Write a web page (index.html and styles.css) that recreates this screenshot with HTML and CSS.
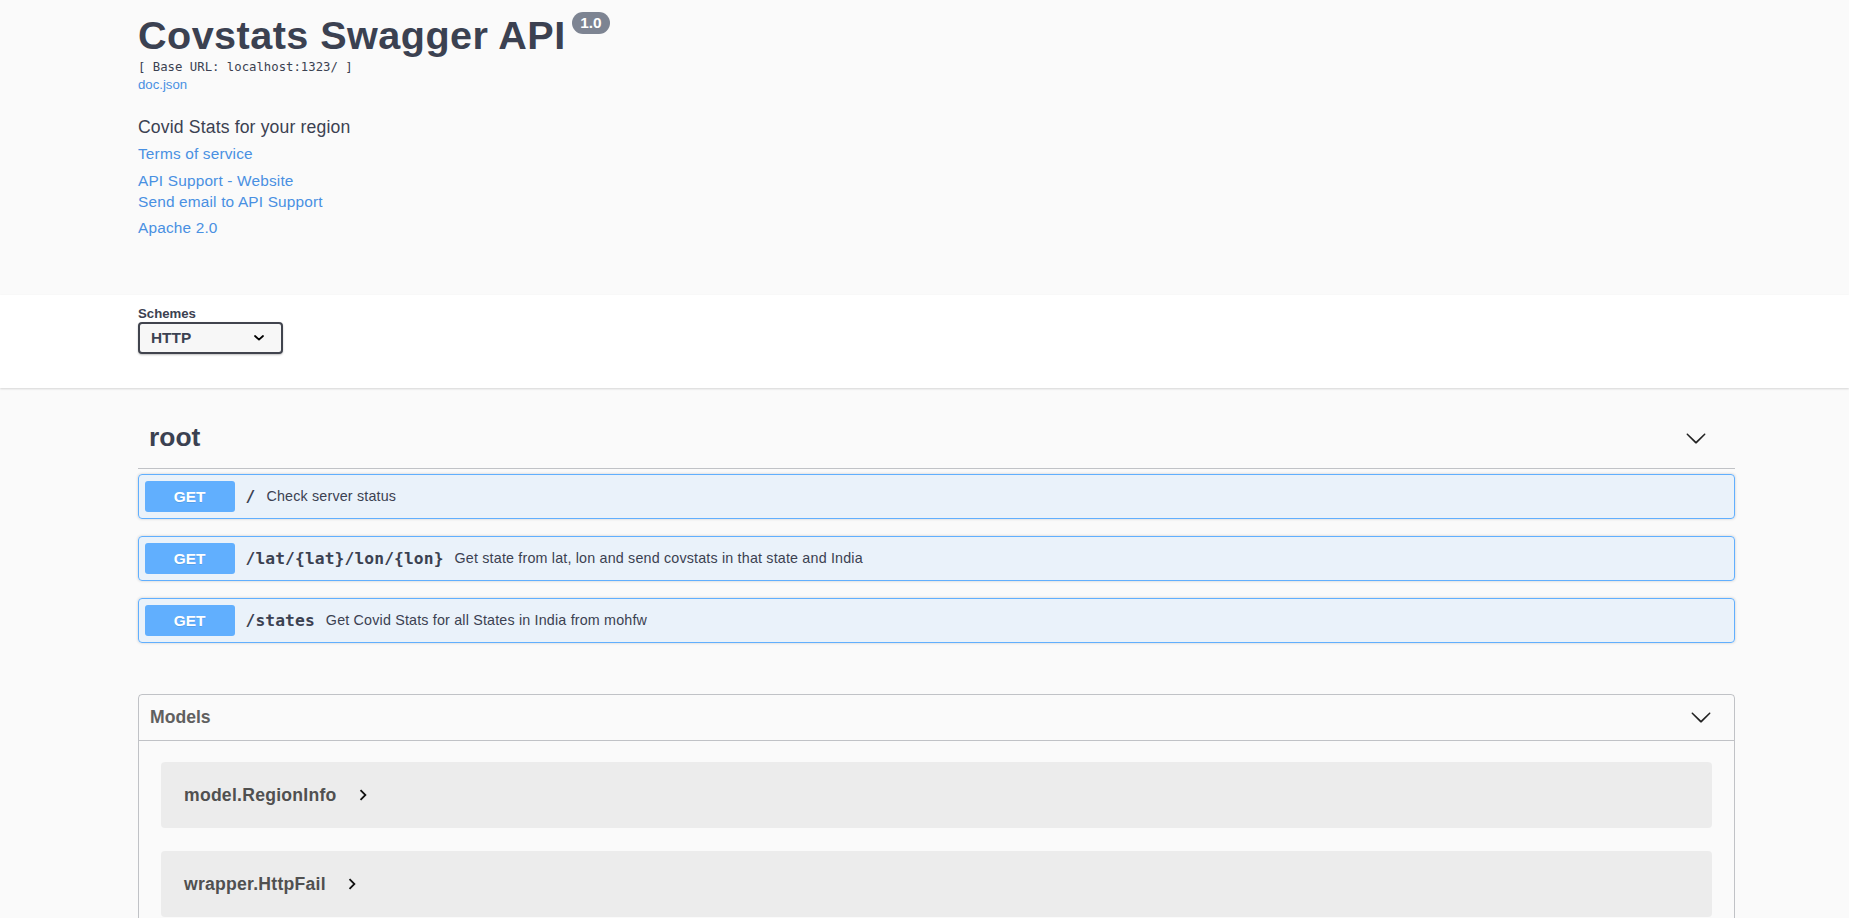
FILE: index.html
```html
<!DOCTYPE html>
<html lang="en">
<head>
<meta charset="utf-8">
<title>Covstats Swagger API</title>
<link rel="stylesheet" href="styles.css">
</head>
<body>
<div class="info">
  <div class="wrapper">
    <h2 class="title">Covstats Swagger API<span class="version">1.0</span></h2>
    <p class="base-url">[ Base URL: localhost:1323/ ]</p>
    <a class="link doc-link" href="#">doc.json</a>
    <p class="description">Covid Stats for your region</p>
    <div class="info-links">
      <a class="link row terms" href="#">Terms of service</a>
      <div class="contact">
        <a class="link row" href="#">API Support - Website</a>
        <a class="link row" href="#">Send email to API Support</a>
      </div>
      <a class="link row license" href="#">Apache 2.0</a>
    </div>
  </div>
</div>

<div class="schemes-bar">
  <div class="wrapper">
    <div class="schemes-label">Schemes</div>
    <div class="select">
      <span>HTTP</span>
      <svg class="select-arrow" width="10" height="6" viewBox="0 0 10 6"><polyline points="1,1 5,4.6 9,1" fill="none" stroke="#000" stroke-width="1.8" stroke-linecap="round" stroke-linejoin="round"/></svg>
    </div>
  </div>
</div>

<div class="wrapper ops">
  <div class="tag-section">
    <h3 class="tag">
      <span>root</span>
      <svg class="chev" width="22" height="22" viewBox="0 0 20 20"><path d="M17.418 6.109c.272-.268.709-.268.979 0s.271.701 0 .969l-7.908 7.83c-.27.268-.707.268-.979 0l-7.908-7.830c-.27-.268-.27-.701 0-.969.271-.268.709-.268.979 0L10 13.25l7.418-7.141z"/></svg>
    </h3>
    <div class="opblock">
      <div class="summary">
        <span class="method">GET</span>
        <span class="path">/</span>
        <span class="desc">Check server status</span>
      </div>
    </div>
    <div class="opblock">
      <div class="summary">
        <span class="method">GET</span>
        <span class="path">/lat/{lat}/lon/{lon}</span>
        <span class="desc">Get state from lat, lon and send covstats in that state and India</span>
      </div>
    </div>
    <div class="opblock">
      <div class="summary">
        <span class="method">GET</span>
        <span class="path">/states</span>
        <span class="desc">Get Covid Stats for all States in India from mohfw</span>
      </div>
    </div>
  </div>

  <section class="models">
    <h4 class="models-head">
      <span>Models</span>
      <svg class="chev" width="22" height="22" viewBox="0 0 20 20"><path d="M17.418 6.109c.272-.268.709-.268.979 0s.271.701 0 .969l-7.908 7.83c-.27.268-.707.268-.979 0l-7.908-7.83c-.27-.268-.27-.701 0-.969.271-.268.709-.268.979 0L10 13.25l7.418-7.141z"/></svg>
    </h4>
    <div class="models-body">
      <div class="model">
        <span class="model-title">model.RegionInfo</span>
        <svg class="model-arrow" width="22" height="22" viewBox="0 0 24 24"><path d="M10 6L8.59 7.41 13.17 12l-4.58 4.590L10 18l6-6z"/></svg>
      </div>
      <div class="model">
        <span class="model-title">wrapper.HttpFail</span>
        <svg class="model-arrow" width="22" height="22" viewBox="0 0 24 24"><path d="M10 6L8.59 7.41 13.17 12l-4.58 4.59L10 18l6-6z"/></svg>
      </div>
    </div>
  </section>
</div>
</body>
</html>
```

FILE: styles.css
```css
html, body {
  margin: 0;
  padding: 0;
  overflow: hidden;
}

body {
  background: #fafafa;
  font-family: "Liberation Sans", Arial, sans-serif;
  color: #3b4151;
}

.wrapper {
  width: 1597px;
  margin: 0 0 0 138px;
  box-sizing: border-box;
}

/* ---------- info ---------- */
.info {
  padding: 11px 0 56.7px;
}

.title {
  margin: 0;
  font-size: 39.6px;
  line-height: 48px;
  font-weight: 700;
  letter-spacing: 0.45px;
  color: #3b4151;
  white-space: nowrap;
}

.version {
  display: inline-block;
  vertical-align: top;
  margin: 1px 0 0 6px;
  height: 22px;
  line-height: 22px;
  padding: 0 8.6px;
  border-radius: 57px;
  background: #7d8492;
  color: #fff;
  font-size: 15.4px;
  letter-spacing: 0;
}

.base-url {
  margin: 0;
  font-family: "DejaVu Sans Mono", "Liberation Mono", monospace;
  font-size: 12.3px;
  line-height: 16px;
  color: #3b4151;
}

.link {
  color: #4990e2;
  text-decoration: none;
}

.doc-link {
  display: block;
  margin-top: 2.4px;
  font-size: 13.2px;
  line-height: 16px;
}

.description {
  margin: 22.8px 0 0;
  font-size: 17.6px;
  line-height: 22px;
  letter-spacing: 0.15px;
  color: #3b4151;
}

.info-links {
  font-size: 15.4px;
  line-height: 20.6px;
  letter-spacing: 0.17px;
}

.info-links .row {
  display: block;
}

.terms {
  margin-top: 6.2px;
}

.contact {
  margin-top: 6px;
}

.license {
  margin-top: 5.4px;
}

/* ---------- schemes ---------- */
.schemes-bar {
  background: #fff;
  box-shadow: 0 1px 2px 0 rgba(0, 0, 0, .15);
  height: 93px;
  box-sizing: border-box;
  padding-top: 11.2px;
}

.schemes-label {
  font-size: 13.2px;
  font-weight: 700;
  line-height: 15px;
  color: #3b4151;
}

.select {
  margin-top: 1.1px;
  width: 145px;
  height: 32px;
  box-sizing: border-box;
  border: 2px solid #41444e;
  border-radius: 4px;
  background: #f7f7f7;
  box-shadow: 0 1px 2px 0 rgba(0, 0, 0, .25);
  display: flex;
  align-items: center;
  justify-content: space-between;
  padding: 0 17px 0 11px;
  font-size: 15.4px;
  font-weight: 700;
  color: #3b4151;
}

.select-arrow {
  display: block;
}

/* ---------- operations ---------- */
.tag-section {
  margin-top: 20px;
}

.tag {
  display: flex;
  align-items: center;
  justify-content: space-between;
  height: 38px;
  padding: 11px 28px 11px 11px;
  margin: 0 0 5.3px;
  border-bottom: 1px solid rgba(59, 65, 81, .3);
  font-size: 26.4px;
  font-weight: 700;
  color: #3b4151;
}

.chev {
  display: block;
  fill: #222;
}

.opblock {
  border: 1px solid #61affe;
  border-radius: 4px;
  background: rgba(97, 175, 254, .1);
  box-shadow: 0 0 3px rgba(0, 0, 0, .19);
  margin-bottom: 17.5px;
}

.summary {
  display: flex;
  align-items: center;
  padding: 5.5px;
}

.method {
  width: 90px;
  height: 31.5px;
  line-height: 31.5px;
  text-align: center;
  border-radius: 3px;
  background: #61affe;
  color: #fff;
  font-size: 15.4px;
  font-weight: 700;
  text-shadow: 0 1px 0 rgba(0, 0, 0, .1);
}

.path {
  padding: 0 11px;
  font-family: "DejaVu Sans Mono", "Liberation Mono", monospace;
  font-size: 16.3px;
  font-weight: 700;
  letter-spacing: 0.1px;
  color: #3b4151;
}

.desc {
  font-size: 14.3px;
  letter-spacing: 0.18px;
  color: #3b4151;
}

/* ---------- models ---------- */
.models {
  margin-top: 51px;
  border: 1px solid rgba(59, 65, 81, .3);
  border-radius: 4px;
}

.models-head {
  display: flex;
  align-items: center;
  justify-content: space-between;
  height: 23px;
  margin: 0;
  padding: 11px 22px 11px 11px;
  border-bottom: 1px solid rgba(59, 65, 81, .3);
  font-size: 17.6px;
  font-weight: 700;
  color: #606060;
}

.models-body {
  padding: 21.4px 21.6px 0 21.7px;
}

.model {
  display: flex;
  align-items: center;
  height: 66px;
  margin-bottom: 23.3px;
  padding-left: 23.3px;
  border-radius: 4px;
  background: #ececec;
}

.model-title {
  font-size: 17.6px;
  font-weight: 700;
  letter-spacing: 0.25px;
  color: #505050;
}

.model-arrow {
  display: block;
  margin-left: 15px;
  fill: #111;
}
```
